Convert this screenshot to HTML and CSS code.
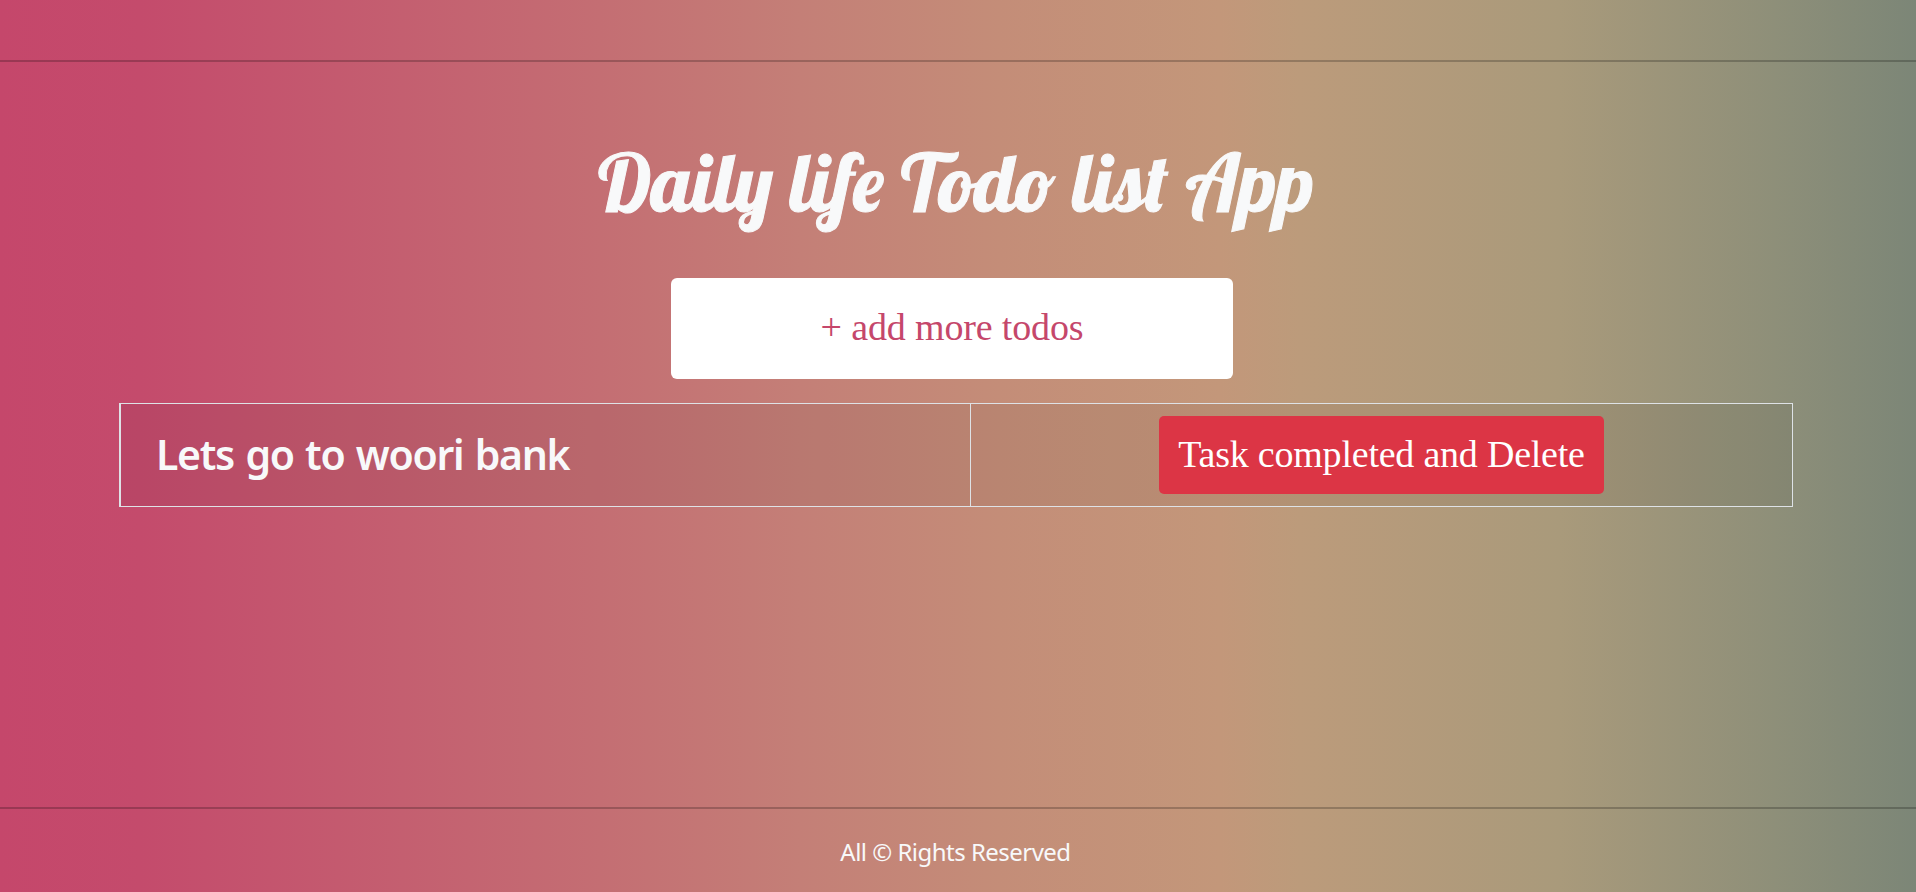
FILE: index.html
```
<!DOCTYPE html>
<html lang="en">
<head>
<meta charset="utf-8">
<title>Daily life Todo list App</title>
<link rel="stylesheet" href="styles.css">
</head>
<body>
<header class="topbar"></header>
<main class="main">
  <h1 class="title">Daily life Todo list App</h1>
  <button class="add">+ add more todos</button>
  <div class="row">
    <div class="cell task"><span class="task-text">Lets go to woori bank</span></div>
    <div class="cell action"><button class="delete">Task completed and Delete</button></div>
  </div>
</main>
<footer class="footer"><span class="copy">All © Rights Reserved</span></footer>
</body>
</html>
```
FILE: styles.css
```
* { box-sizing: border-box; }
body {
  margin: 0;
  height: 892px;
  display: flex;
  flex-direction: column;
  overflow: hidden;
  color: #f8f9fa;
  font-family: "Segoe UI", "Noto Sans", sans-serif;
  background: linear-gradient(to right, #c5476b 0, #c44b6c 140px, #c46e73 600px, #c47f77 800px, #c48d78 1000px, #c3977a 1220px, #bc9b7b 1300px, #a99a7b 1560px, #8e8f79 1775px, #7c8677 1916px);
}
.topbar { height: 62px; border-bottom: 2px solid rgba(0,0,0,.22); }
.main { flex: 1; display: flex; flex-direction: column; align-items: center; }
.title {
  margin: 70px 4px 0 0;
  height: 100px;
  white-space: nowrap;
  font: 400 80px/100px Lobster, "Liberation Serif", serif;
  -webkit-text-stroke: 1px #f8f9fa;
}
.add {
  width: 562px;
  height: 101px;
  margin: 46px 12px 0 0;
  padding: 0 0 3px;
  border: 0;
  border-radius: 6px;
  background: #fff;
  color: #c5476b;
  font: 38px "Liberation Serif", serif;
  letter-spacing: -.15px;
}
.row {
  display: grid;
  grid-template-columns: 850px 1fr;
  width: 1674px;
  height: 104px;
  margin: 24px 4px 0 0;
  border: 1px solid #dee2e6;
  border-left-width: 2px;
  background: rgba(0,0,0,.055);
}
.cell { display: flex; align-items: center; }
.task { padding: 0 0 2px 35px; border-right: 1px solid #dee2e6; }
.task-text { font-size: 41px; font-weight: 600; white-space: nowrap; letter-spacing: -1.3px; word-spacing: 2px; }
.action { justify-content: center; }
.delete {
  width: 445px;
  height: 78px;
  padding: 0 0 2px;
  border: 0;
  border-radius: 5px;
  background: #dc3545;
  color: #fff;
  white-space: nowrap;
  font: 38px "Liberation Serif", serif;
  letter-spacing: -.22px;
}
.footer {
  height: 85px;
  border-top: 2px solid rgba(0,0,0,.22);
  text-align: center;
  padding: 26px 5px 0 0;
}
.copy { font-size: 24px; line-height: 34px; letter-spacing: -.52px; }
```
